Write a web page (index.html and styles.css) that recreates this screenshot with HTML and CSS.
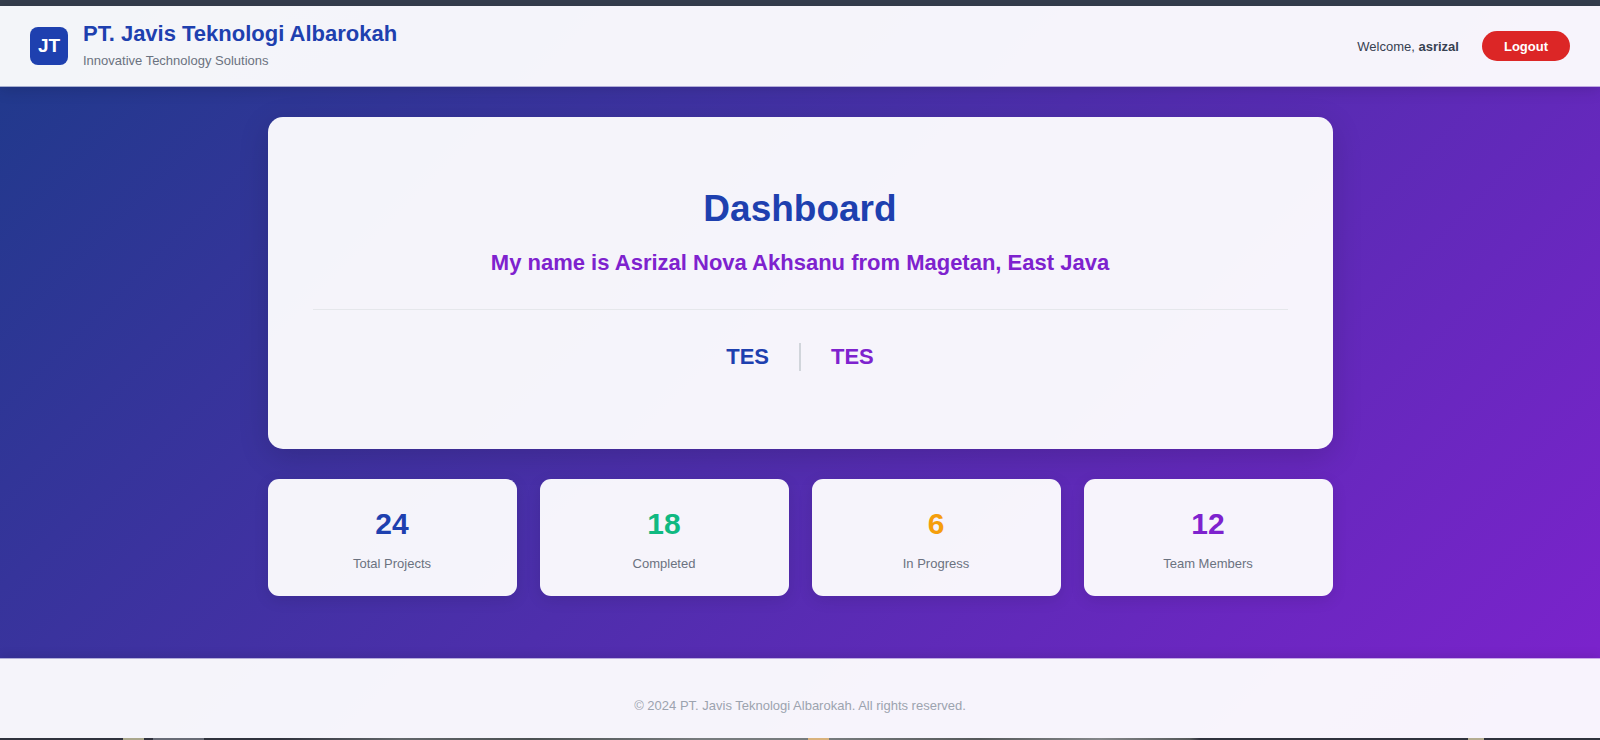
FILE: index.html
```html
<!DOCTYPE html>
<html lang="en">
<head>
<meta charset="utf-8">
<meta name="viewport" content="width=device-width, initial-scale=1">
<title>Dashboard</title>
<link rel="stylesheet" href="styles.css">
</head>
<body>
<div class="frame-top"></div>
<div class="page">
  <header class="header">
    <div class="brand">
      <div class="logo">JT</div>
      <div class="brand-text">
        <div class="brand-name">PT. Javis Teknologi Albarokah</div>
        <div class="brand-tagline">Innovative Technology Solutions</div>
      </div>
    </div>
    <div class="user">
      <span>Welcome, <strong>asrizal</strong></span>
      <button class="logout" type="button">Logout</button>
    </div>
  </header>
  <main class="main">
    <section class="hero">
      <h1 class="hero-title">Dashboard</h1>
      <h2 class="hero-subtitle">My name is Asrizal Nova Akhsanu from Magetan, East Java</h2>
      <div class="tests">
        <span class="blue">TES</span>
        <span class="divider"></span>
        <span class="purple">TES</span>
      </div>
    </section>
    <section class="stats">
      <div class="stat"><div class="stat-value blue">24</div><div class="stat-label">Total Projects</div></div>
      <div class="stat"><div class="stat-value green">18</div><div class="stat-label">Completed</div></div>
      <div class="stat"><div class="stat-value orange">6</div><div class="stat-label">In Progress</div></div>
      <div class="stat"><div class="stat-value purple">12</div><div class="stat-label">Team Members</div></div>
    </section>
  </main>
  <footer class="footer">© 2024 PT. Javis Teknologi Albarokah. All rights reserved.</footer>
</div>
<div class="frame-bottom"></div>
</body>
</html>
```
FILE: styles.css
```css
* {
  box-sizing: border-box;
}

body {
  margin: 0;
  min-height: 100vh;
  display: flex;
  flex-direction: column;
  font-family: "Liberation Sans", Arial, sans-serif;
  font-size: 13px;
}

.frame-top {
  height: 6px;
  background: #353e4e;
}

.frame-bottom {
  height: 2px;
  background: linear-gradient(90deg,
    #30323d 123px, #aaa78c 123px 144px, #30323d 144px 153px, #686b76 153px 204px,
    #30323d 204px 280px, #62666a 400px, #4b5052 530px, #777b7d 700px,
    #777b7d 808px, #d9b27c 808px 829px, #777b7d 829px, #55585a 980px, #85878a 1100px,
    #55585a 1190px, #30323d 1200px 1468px, #b5ad92 1468px 1484px, #30323d 1484px);
}

.page {
  flex: 1;
  display: flex;
  flex-direction: column;
  background: linear-gradient(135deg, #1e3a8a 0%, #7e22ce 100%);
}

.header {
  display: flex;
  justify-content: space-between;
  align-items: center;
  min-height: 81px;
  padding: 12px 30px;
  background: rgba(255, 255, 255, 0.95);
  background-clip: padding-box;
  border-bottom: 1px solid rgba(255, 255, 255, 0.6);
  box-shadow: 0 2px 15px rgba(0, 0, 0, 0.15);
}

.brand {
  display: flex;
  align-items: center;
  gap: 15px;
}

.logo {
  display: grid;
  place-items: center;
  width: 38px;
  height: 38px;
  border-radius: 8px;
  background: #1e40af;
  color: #fff;
  font-size: 19px;
  font-weight: bold;
}

.brand-name {
  line-height: 30px;
  font-size: 22px;
  font-weight: bold;
  color: #1e40af;
}

.brand-tagline {
  line-height: 24px;
  color: #6b7280;
}

.user {
  display: flex;
  align-items: center;
  gap: 23px;
  color: #374151;
}

.logout {
  height: 30px;
  padding: 0 22px;
  border: 0;
  border-radius: 15px;
  background: #dc2626;
  color: #fff;
  font: bold 13px "Liberation Sans", Arial, sans-serif;
}

.main {
  flex: 1;
  width: 100%;
  max-width: 1125px;
  margin: 0 auto;
  padding: 30px;
}

.hero {
  padding: 68px 45px 78px;
  border-radius: 15px;
  background: rgba(255, 255, 255, 0.95);
  box-shadow: 0 8px 30px rgba(0, 0, 0, 0.15);
  text-align: center;
}

.hero-title {
  margin: 0 0 12px;
  line-height: 48px;
  font-size: 37px;
  color: #1e40af;
}

.hero-subtitle {
  margin: 0 0 28px;
  line-height: 36px;
  font-size: 22px;
  color: #7e22ce;
}

.tests {
  display: flex;
  justify-content: center;
  align-items: center;
  gap: 30px;
  padding-top: 33px;
  border-top: 1px solid #e5e7eb;
  font-size: 22px;
  font-weight: bold;
}

.divider {
  width: 2px;
  height: 28px;
  background: #d1d5db;
}

.stats {
  display: grid;
  grid-template-columns: repeat(4, 1fr);
  gap: 23px;
  margin-top: 30px;
}

.stat {
  padding: 25px 22px 20px;
  border-radius: 11px;
  background: rgba(255, 255, 255, 0.95);
  box-shadow: 0 4px 15px rgba(0, 0, 0, 0.1);
  text-align: center;
}

.stat-value {
  line-height: 40px;
  font-size: 30px;
  font-weight: bold;
}

.stat-label {
  margin-top: 8px;
  line-height: 24px;
  color: #6b7280;
}

.blue {
  color: #1e40af;
}

.green {
  color: #10b981;
}

.orange {
  color: #f59e0b;
}

.purple {
  color: #7e22ce;
}

.footer {
  padding: 35px 30px 20px;
  border-top: 1px solid rgba(255, 255, 255, 0.6);
  background: rgba(255, 255, 255, 0.95);
  background-clip: padding-box;
  box-shadow: 0 -2px 10px rgba(0, 0, 0, 0.1);
  line-height: 24px;
  text-align: center;
  color: #9ca3af;
}
```
